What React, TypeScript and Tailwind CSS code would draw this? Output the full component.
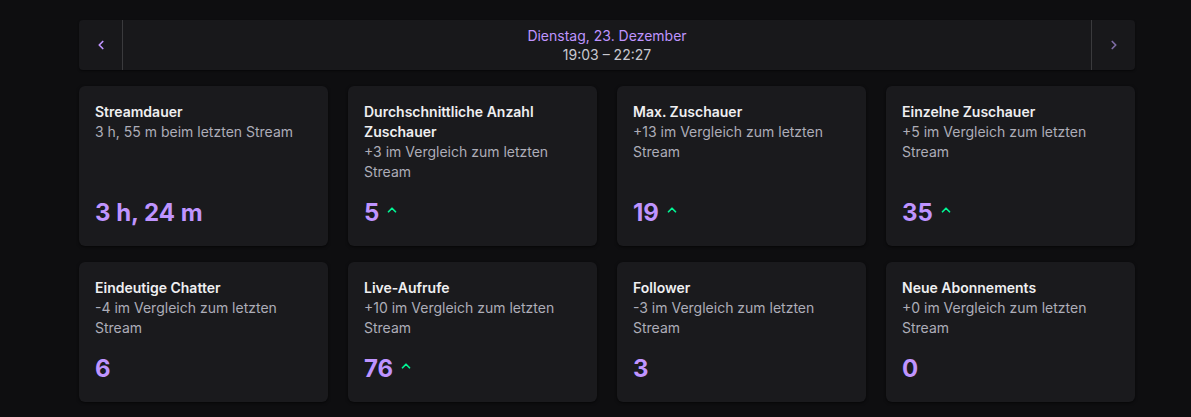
import { ChevronLeft, ChevronRight, ChevronUp } from 'lucide-react'

type Stat = {
  title: string
  sub: string
  value: string
  up?: boolean
}

const stats: Stat[] = [
  { title: 'Streamdauer', sub: '3 h, 55 m beim letzten Stream', value: '3 h, 24 m' },
  { title: 'Durchschnittliche Anzahl Zuschauer', sub: '+3 im Vergleich zum letzten Stream', value: '5', up: true },
  { title: 'Max. Zuschauer', sub: '+13 im Vergleich zum letzten Stream', value: '19', up: true },
  { title: 'Einzelne Zuschauer', sub: '+5 im Vergleich zum letzten Stream', value: '35', up: true },
  { title: 'Eindeutige Chatter', sub: '-4 im Vergleich zum letzten Stream', value: '6' },
  { title: 'Live-Aufrufe', sub: '+10 im Vergleich zum letzten Stream', value: '76', up: true },
  { title: 'Follower', sub: '-3 im Vergleich zum letzten Stream', value: '3' },
  { title: 'Neue Abonnements', sub: '+0 im Vergleich zum letzten Stream', value: '0' },
]

function StatCard({ stat }: { stat: Stat }) {
  return (
    <div className="flex flex-col rounded-md bg-[#1a1a1d] px-4 pt-4 pb-[17px] shadow-[0_1px_3px_rgba(0,0,0,0.6)]">
      <div className="text-sm font-semibold leading-5 text-[#efeff1]">{stat.title}</div>
      <div className="text-sm leading-5 text-[#adadb8]">{stat.sub}</div>
      <div className="mt-auto flex items-center gap-1.5 pt-[15px]">
        <span className="text-2xl font-bold leading-8 text-[#bf94ff]">{stat.value}</span>
        {stat.up && <ChevronUp className="mb-1.5 h-3.5 w-3.5 text-[#00f593]" strokeWidth={3} />}
      </div>
    </div>
  )
}

export default function App() {
  return (
    <div
      className="min-h-[417px] bg-[#0e0e10] pt-5 pl-[79px]"
      style={{ fontFamily: 'Inter, "Noto Sans", sans-serif' }}
    >
      <div className="w-[1056px]">
        {/* Date switcher */}
        <div className="flex h-[50px] rounded-sm bg-[#18181b] shadow-[0_1px_2px_rgba(0,0,0,0.5)]">
          <button className="flex w-11 items-center justify-center border-r border-[#3a3a3d] text-[#bf94ff]">
            <ChevronLeft className="h-3.5 w-3.5" strokeWidth={3} />
          </button>
          <div className="flex flex-1 flex-col items-center justify-center">
            <span className="text-sm leading-[19px] text-[#bf94ff]">Dienstag, 23. Dezember</span>
            <span className="text-sm leading-[19px] text-[#c8c8d0]">19:03 – 22:27</span>
          </div>
          <button className="flex w-11 items-center justify-center border-l border-[#3a3a3d] text-[#7d6ba3]">
            <ChevronRight className="h-3.5 w-3.5" strokeWidth={3} />
          </button>
        </div>

        {/* Stats */}
        <div className="mt-4 grid grid-cols-4 gap-x-5 gap-y-4">
          {stats.map((s) => (
            <StatCard key={s.title} stat={s} />
          ))}
        </div>
      </div>
    </div>
  )
}
